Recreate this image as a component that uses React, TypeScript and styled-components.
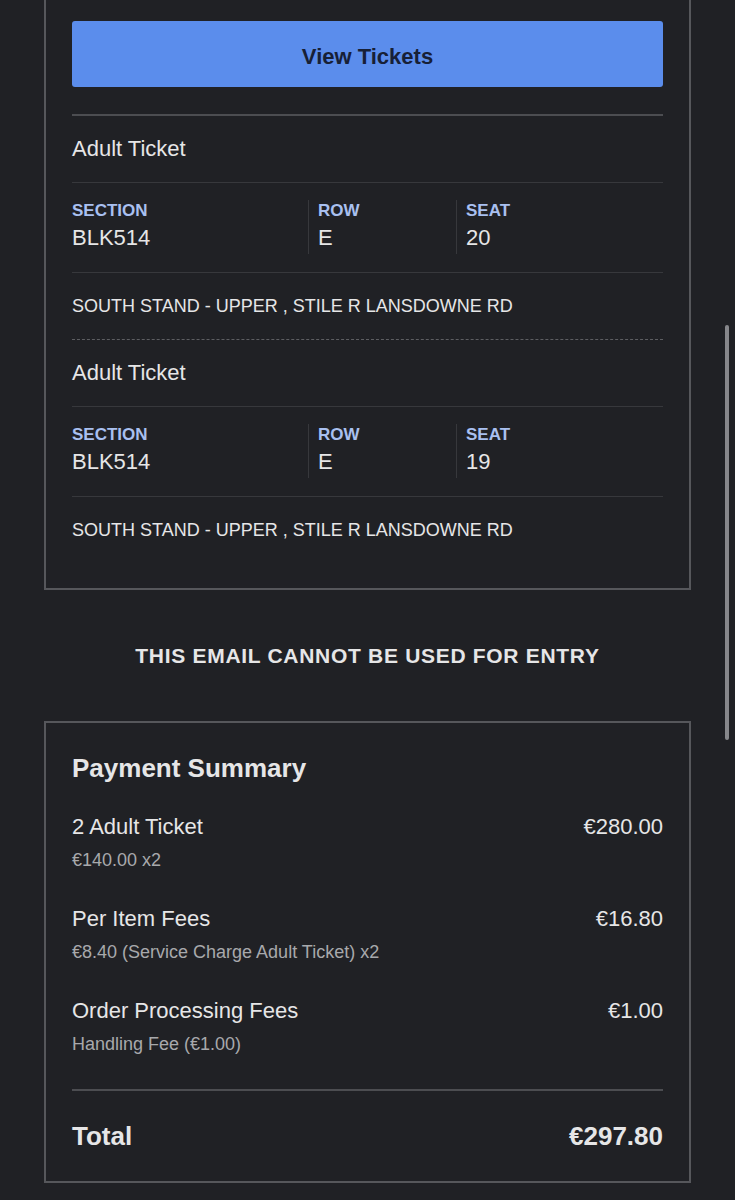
import React from "react";
import styled, { createGlobalStyle } from "styled-components";

interface Seat {
  section: string;
  row: string;
  seat: string;
  location: string;
}

interface Charge {
  title: string;
  detail: string;
  amount: string;
}

const tickets: Seat[] = [
  { section: "BLK514", row: "E", seat: "20", location: "SOUTH STAND - UPPER , STILE R LANSDOWNE RD" },
  { section: "BLK514", row: "E", seat: "19", location: "SOUTH STAND - UPPER , STILE R LANSDOWNE RD" },
];

const charges: Charge[] = [
  { title: "2 Adult Ticket", detail: "€140.00 x2", amount: "€280.00" },
  { title: "Per Item Fees", detail: "€8.40 (Service Charge Adult Ticket) x2", amount: "€16.80" },
  { title: "Order Processing Fees", detail: "Handling Fee (€1.00)", amount: "€1.00" },
];

// Styles
const GlobalStyle = createGlobalStyle`
  html, body {
    margin: 0;
    padding: 0;
    background: #202125;
  }
  body {
    font-family: "Liberation Sans", Arial, sans-serif;
    color: #e6e6e7;
    overflow: hidden;
  }
`;

const Page = styled.div`
  padding: 0 44px;
  min-height: 1200px;
`;

const Card = styled.section<{ $open?: boolean }>`
  border: 2px solid #56575b;
  border-top: ${(p) => (p.$open ? "none" : "2px solid #56575b")};
  padding: ${(p) => (p.$open ? "21px 26px 25px" : "29px 26px 29px")};
`;

const ViewButton = styled.button`
  display: block;
  width: 100%;
  height: 66px;
  padding: 6px 0 0;
  border: none;
  border-radius: 3px;
  background: #5b8dec;
  color: #172036;
  font-family: inherit;
  font-size: 22px;
  font-weight: 700;
  margin-bottom: 27px;
`;

const Rule = styled.hr<{ $thick?: boolean; $dashed?: boolean }>`
  margin: 0;
  border: none;
  border-top: ${(p) =>
    p.$dashed
      ? "1px dashed #5d5e62"
      : p.$thick
      ? "2px solid #4c4d51"
      : "1px solid #37383c"};
`;

const TicketTitle = styled.div`
  height: 66px;
  display: flex;
  align-items: center;
  font-size: 22px;
`;

const SeatGrid = styled.div`
  display: grid;
  grid-template-columns: 236px 148px 1fr;
  padding: 17px 0 18px;
`;

const SeatCol = styled.div<{ $divider?: boolean }>`
  border-left: ${(p) => (p.$divider ? "1px solid #37383c" : "none")};
  padding-left: ${(p) => (p.$divider ? "9px" : "0")};
`;

const SeatLabel = styled.div`
  font-size: 17px;
  font-weight: 700;
  line-height: 22px;
  color: #a9c0f0;
`;

const SeatValue = styled.div`
  font-size: 22px;
  line-height: 32px;
`;

const Location = styled.div`
  height: 66px;
  display: flex;
  align-items: center;
  font-size: 18px;
`;

const Notice = styled.div`
  padding: 54px 0 53px;
  text-align: center;
  font-size: 21px;
  line-height: 24px;
  font-weight: 700;
  letter-spacing: 0.7px;
`;

const SummaryTitle = styled.h2`
  margin: 0 0 29px;
  font-size: 26px;
  line-height: 32px;
  font-weight: 700;
`;

const ChargeRow = styled.div`
  display: flex;
  justify-content: space-between;
  align-items: flex-start;
  margin-bottom: 33px;
`;

const ChargeTitle = styled.div`
  font-size: 22px;
  line-height: 28px;
`;

const ChargeDetail = styled.div`
  margin-top: 7px;
  font-size: 18px;
  line-height: 24px;
  color: #a8a9ac;
`;

const Amount = styled.div`
  font-size: 22px;
  line-height: 28px;
`;

const TotalRow = styled.div`
  display: flex;
  justify-content: space-between;
  margin-top: 29px;
  font-size: 26px;
  line-height: 32px;
  font-weight: 700;
`;

const Scrollbar = styled.div`
  position: fixed;
  left: 725px;
  top: 325px;
  width: 4px;
  height: 415px;
  border-radius: 2px;
  background: #86878b;
`;

const Ticket = ({ t }: { t: Seat }) => (
  <>
    <TicketTitle>Adult Ticket</TicketTitle>
    <Rule />
    <SeatGrid>
      <SeatCol>
        <SeatLabel>SECTION</SeatLabel>
        <SeatValue>{t.section}</SeatValue>
      </SeatCol>
      <SeatCol $divider>
        <SeatLabel>ROW</SeatLabel>
        <SeatValue>{t.row}</SeatValue>
      </SeatCol>
      <SeatCol $divider>
        <SeatLabel>SEAT</SeatLabel>
        <SeatValue>{t.seat}</SeatValue>
      </SeatCol>
    </SeatGrid>
    <Rule />
    <Location>{t.location}</Location>
  </>
);

const App = () => {
  return (
    <Page>
      <GlobalStyle />
      <Card $open>
        <ViewButton>View Tickets</ViewButton>
        <Rule $thick />
        {tickets.map((t, i) => (
          <React.Fragment key={i}>
            {i > 0 && <Rule $dashed />}
            <Ticket t={t} />
          </React.Fragment>
        ))}
      </Card>
      <Notice>THIS EMAIL CANNOT BE USED FOR ENTRY</Notice>
      <Card>
        <SummaryTitle>Payment Summary</SummaryTitle>
        {charges.map((c) => (
          <ChargeRow key={c.title}>
            <div>
              <ChargeTitle>{c.title}</ChargeTitle>
              <ChargeDetail>{c.detail}</ChargeDetail>
            </div>
            <Amount>{c.amount}</Amount>
          </ChargeRow>
        ))}
        <Rule $thick />
        <TotalRow>
          <span>Total</span>
          <span>€297.80</span>
        </TotalRow>
      </Card>
      <Scrollbar />
    </Page>
  );
};

export default App;
